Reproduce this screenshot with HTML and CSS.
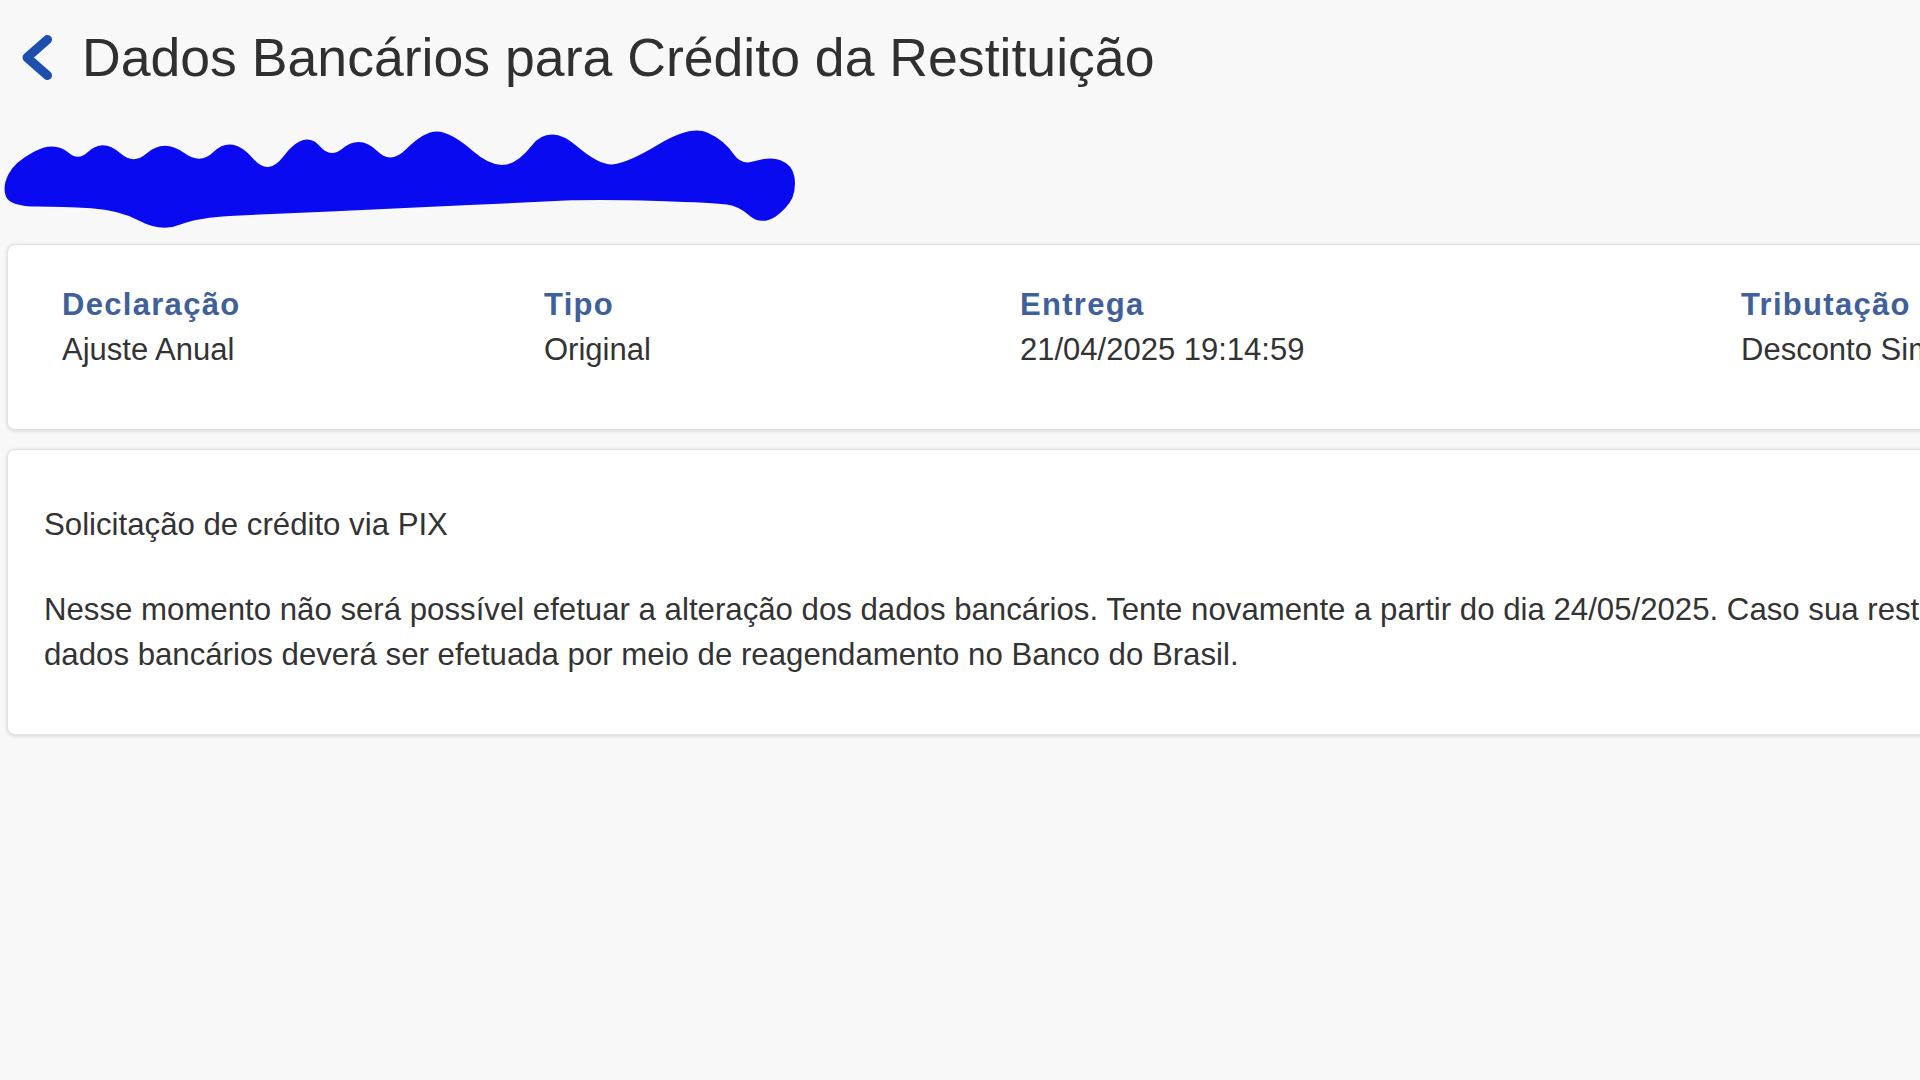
FILE: index.html
```html
<!DOCTYPE html>
<html lang="pt-BR">
<head>
<meta charset="utf-8">
<title>Dados Bancários para Crédito da Restituição</title>
<link rel="stylesheet" href="styles.css">
</head>
<body>
<div class="page">
  <header class="header">
    <svg class="back" width="30" height="45" viewBox="0 0 30 45" aria-hidden="true">
      <path d="M25.5 4.5 L5 22.5 L25.5 40.5" fill="none" stroke="#1d4fae" stroke-width="9" stroke-linecap="round" stroke-linejoin="round"/>
    </svg>
    <h1 class="title">Dados Bancários para Crédito da Restituição</h1>
  </header>

  <svg class="scribble" width="790" height="98" viewBox="0 0 645 80" aria-hidden="true">
    <path d="M5.5 35 Q10 26 25 18 Q40 10 50 18.5 Q60 27 70 17.5 Q80 8 92.5 19 Q105 30 117.5 19 Q130 8 145 19 Q160 30 172.5 17.5 Q185 5 200 22.5 Q215 40 230 20.5 Q245 1 255 13 Q265 25 277.5 15 Q290 5 302.5 17.5 Q315 30 330 15 Q345 0 355 2 Q365 4 380 17 Q395 30 407.5 29 Q420 28 432.5 12 Q445 -4 465 13 Q485 30 497.5 28.5 Q510 27 535 12 Q560 -3 572.5 2.5 Q585 8 592.5 19 Q600 30 612.5 26 Q625 22 632 25 Q640 28 641.5 36 Q643 44 640 52 Q636 60 627 66 Q617 72 609 64.5 Q600 57 590 55.5 Q580 54 533.5 52.5 Q487 51 462 52 Q437 53 374.5 56 Q312 59 265.5 61 Q219 63 187.5 64.5 Q156 66 142 72 Q128 78 111 69 Q94 60 70.5 58.5 Q47 57 26.5 57 Q6 57 3.5 50.5 Q1 44 5.5 35 Z" fill="#0a0af0" stroke="#0a0af0" stroke-width="6" stroke-linejoin="round"/>
  </svg>

  <section class="card summary">
    <div class="field">
      <div class="label">Declaração</div>
      <div class="value">Ajuste Anual</div>
    </div>
    <div class="field">
      <div class="label">Tipo</div>
      <div class="value">Original</div>
    </div>
    <div class="field">
      <div class="label">Entrega</div>
      <div class="value">21/04/2025 19:14:59</div>
    </div>
    <div class="field">
      <div class="label">Tributação</div>
      <div class="value">Desconto Simplificado</div>
    </div>
  </section>

  <section class="card message">
    <p class="subtitle">Solicitação de crédito via PIX</p>
    <p class="text">Nesse momento não será possível efetuar a alteração dos dados bancários. Tente novamente a partir do dia 24/05/2025. Caso sua restituição já tenha sido reagendada, a alteração dos<br>dados bancários deverá ser efetuada por meio de reagendamento no Banco do Brasil.</p>
  </section>
</div>
</body>
</html>
```

FILE: styles.css
```css
html, body {
  margin: 0;
  padding: 0;
  background: #f8f8f8;
  overflow: hidden;
}

body {
  width: 1920px;
  height: 1080px;
  font-family: "Liberation Sans", Arial, Helvetica, sans-serif;
  color: #333333;
}

.page {
  width: 2700px;
  padding-left: 7px;
  padding-top: 25px;
  display: flex;
  flex-direction: column;
  align-items: flex-start;
}

.header {
  display: flex;
  align-items: center;
  gap: 30px;
  padding-left: 15px;
  height: 65px;
}

.back {
  display: block;
  flex: none;
}

.title {
  margin: 0;
  font-size: 53.6px;
  font-weight: 400;
  line-height: 65px;
  color: #303030;
  white-space: nowrap;
}

.scribble {
  display: block;
  overflow: visible;
  margin-top: 43px;
  margin-left: -2px;
  margin-bottom: -7px;
}

.card {
  align-self: stretch;
  background: #ffffff;
  border: 1px solid #e1e1e1;
  border-radius: 8px;
  box-shadow: 0 1px 4px rgba(0, 0, 0, 0.14);
}

.summary {
  margin-top: 20px;
  padding: 37px 0 57px 54px;
  display: grid;
  grid-template-columns: 482px 476px 721px 1fr;
}

.label {
  font-size: 31px;
  font-weight: 700;
  letter-spacing: 1.3px;
  line-height: 45px;
  color: #40609a;
}

.value {
  font-size: 31px;
  line-height: 45px;
  color: #333333;
  white-space: nowrap;
}

.message {
  margin-top: 19px;
  padding: 52px 0 57px 36px;
}

.subtitle,
.text {
  margin: 0;
  font-size: 31.2px;
  line-height: 45px;
  color: #333333;
}

.text {
  margin-top: 40px;
  white-space: nowrap;
}
```
